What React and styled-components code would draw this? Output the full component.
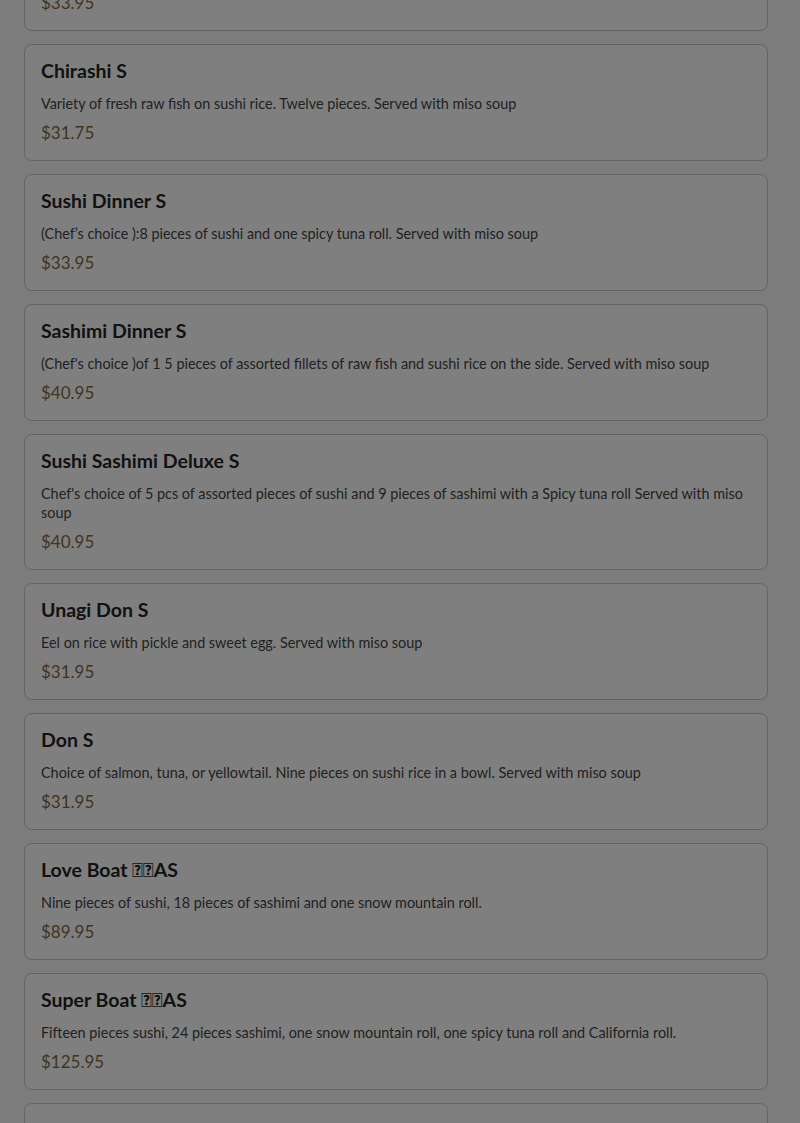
import React from 'react';
import styled, { createGlobalStyle } from 'styled-components';

const GlobalStyle = createGlobalStyle`
  html, body {
    margin: 0;
    padding: 0;
    background: #f8f8f8;
    font-family: 'Lato', 'Noto Sans', sans-serif;
  }
`;

const Page = styled.div`
  height: 1123px;
  overflow: hidden;
  position: relative;
`;

const List = styled.div`
  display: flex;
  flex-direction: column;
  gap: 13px;
  padding: 0 32px 0 24px;
  margin-top: -86px;
`;

const Card = styled.div`
  background: #ffffff;
  border: 1px solid #c8c8c8;
  border-radius: 8px;
  padding: 16px 16px 16px;
  display: flex;
  flex-direction: column;
`;

const Title = styled.div`
  font-size: 19.5px;
  font-weight: 700;
  line-height: 19px;
  color: #242424;
`;

const Desc = styled.div`
  font-size: 14.4px;
  line-height: 19px;
  color: #444;
  margin-top: 14px;
`;

const Price = styled.div`
  font-size: 17px;
  line-height: 22px;
  color: #85683f;
  margin-top: 9px;
`;

const Overlay = styled.div`
  position: fixed;
  inset: 0;
  background: rgba(0, 0, 0, 0.5);
`;

const items = [
  { name: 'Sushi Dinner', desc: 'Chef’s choice sushi. Served with miso soup', price: '$33.95' },
  { name: 'Chirashi S', desc: 'Variety of fresh raw fish on sushi rice. Twelve pieces. Served with miso soup', price: '$31.75' },
  { name: 'Sushi Dinner S', desc: '(Chef’s choice ):8 pieces of sushi and one spicy tuna roll. Served with miso soup', price: '$33.95' },
  { name: 'Sashimi Dinner S', desc: "(Chef's choice )of 1 5 pieces of assorted fillets of raw fish and sushi rice on the side. Served with miso soup", price: '$40.95' },
  { name: 'Sushi Sashimi Deluxe S', desc: "Chef's choice of 5 pcs of assorted pieces of sushi and 9 pieces of sashimi with a Spicy tuna roll Served with miso soup", price: '$40.95' },
  { name: 'Unagi Don S', desc: 'Eel on rice with pickle and sweet egg. Served with miso soup', price: '$31.95' },
  { name: 'Don S', desc: 'Choice of salmon, tuna, or yellowtail. Nine pieces on sushi rice in a bowl. Served with miso soup', price: '$31.95' },
  { name: 'Love Boat \uE000\uE000AS', desc: 'Nine pieces of sushi, 18 pieces of sashimi and one snow mountain roll.', price: '$89.95' },
  { name: 'Super Boat \uE000\uE000AS', desc: 'Fifteen pieces sushi, 24 pieces sashimi, one snow mountain roll, one spicy tuna roll and California roll.', price: '$125.95' },
  { name: 'Party Boat', desc: 'Chef’s choice assortment.', price: '$150.95' },
];

function App() {
  return (
    <>
      <GlobalStyle />
      <Page>
        <List>
          {items.map((item, i) => (
            <Card key={i}>
              <Title>{item.name}</Title>
              <Desc>{item.desc}</Desc>
              <Price>{item.price}</Price>
            </Card>
          ))}
        </List>
        <Overlay />
      </Page>
    </>
  );
}

export default App;
